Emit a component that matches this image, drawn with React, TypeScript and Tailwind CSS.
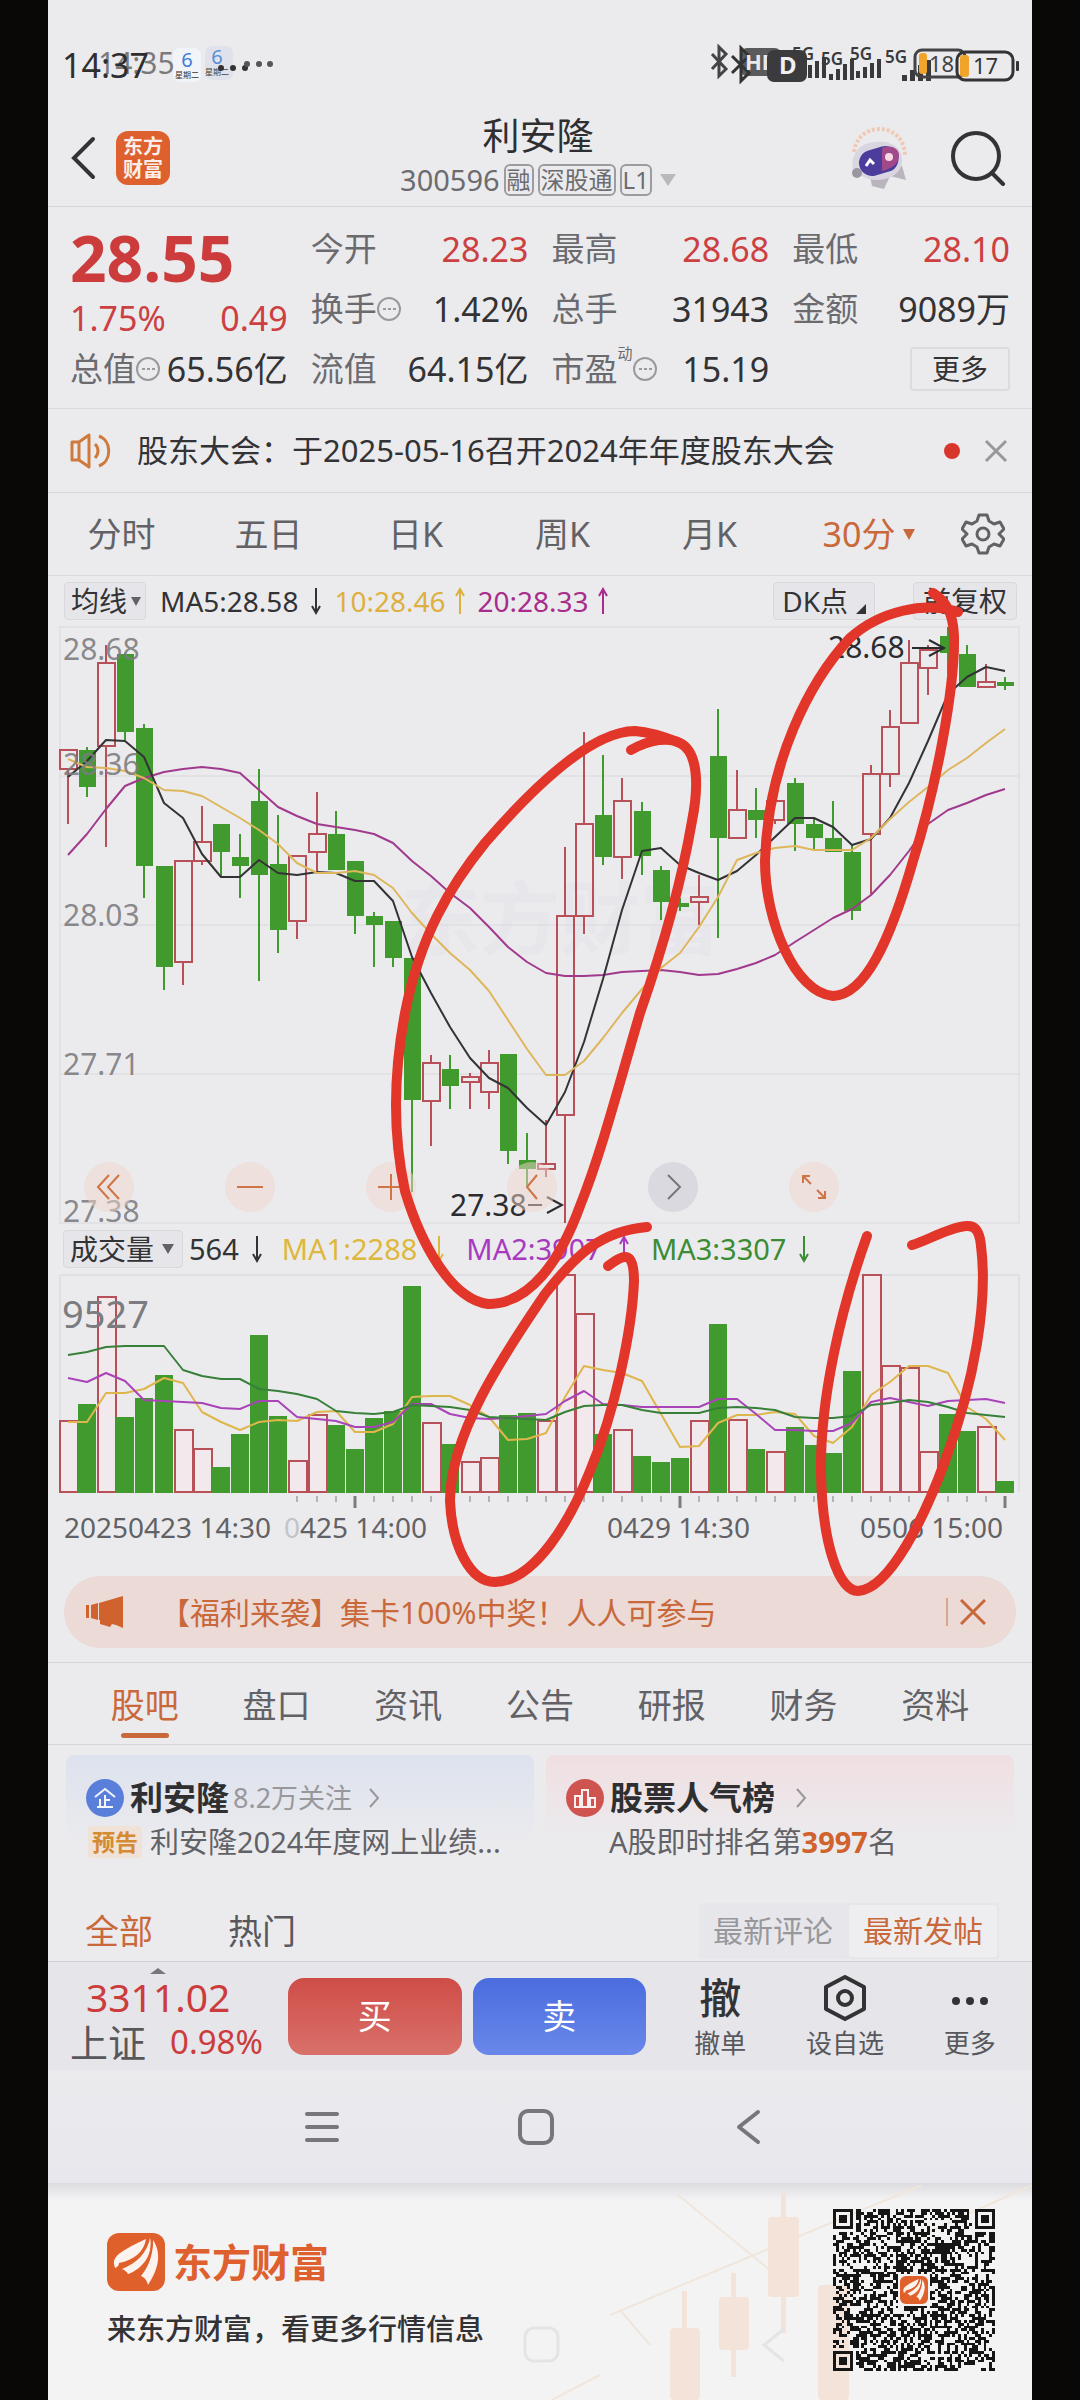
import React, { useState } from 'react';

const PITCH = 19.12;
const FIRST_X = 20;

const cx = (i: number) => Math.round(FIRST_X + i * PITCH);

// [rising, high, body top, body bottom, low]
const CANDLES: [number, number, number, number, number][] = [
  [1, 124, 124, 143, 198],
  [0, 121, 124, 161, 171],
  [1, 19, 37, 120, 221],
  [0, 27, 28, 106, 114],
  [0, 98, 102, 240, 272],
  [0, 240, 240, 341, 364],
  [1, 235, 235, 336, 359],
  [1, 180, 216, 235, 239],
  [0, 198, 198, 226, 250],
  [0, 208, 231, 240, 272],
  [0, 143, 175, 249, 355],
  [0, 189, 238, 304, 327],
  [1, 230, 230, 295, 313],
  [1, 166, 208, 226, 247],
  [0, 185, 208, 244, 244],
  [0, 235, 235, 290, 308],
  [0, 286, 290, 299, 341],
  [0, 295, 295, 332, 341],
  [0, 332, 332, 474, 566],
  [1, 429, 437, 475, 520],
  [0, 429, 443, 460, 483],
  [1, 447, 451, 456, 483],
  [1, 424, 437, 466, 483],
  [0, 428, 428, 525, 538],
  [0, 507, 534, 543, 560],
  [1, 494, 538, 543, 551],
  [1, 221, 290, 489, 597],
  [1, 106, 198, 290, 308],
  [0, 129, 189, 231, 239],
  [1, 152, 175, 231, 253],
  [0, 176, 185, 230, 249],
  [0, 240, 244, 276, 294],
  [0, 272, 277, 281, 285],
  [1, 249, 271, 276, 299],
  [0, 83, 130, 212, 312],
  [1, 144, 184, 212, 212],
  [0, 162, 184, 194, 212],
  [1, 175, 175, 194, 198],
  [0, 152, 157, 198, 225],
  [0, 192, 198, 212, 224],
  [0, 175, 212, 226, 226],
  [0, 218, 226, 285, 294],
  [1, 139, 148, 208, 268],
  [1, 84, 101, 148, 161],
  [1, 14, 37, 97, 97],
  [1, 19, 24, 42, 69],
  [0, 1, 10, 27, 48],
  [0, 19, 28, 61, 61],
  [1, 38, 56, 61, 61],
  [0, 51, 56, 60, 64],
];

const MA5 = [
  151, 135, 114, 115, 131, 177, 192, 228, 251, 251, 234, 247, 249, 246, 247, 255, 255, 275, 331, 367,
  401, 432, 452, 462, 482, 499, 466, 416, 353, 284, 225, 222, 239, 247, 254, 245, 229, 211, 192, 192,
  201, 219, 213, 192, 157, 115, 68, 51, 41, 45,
];
const MA10 = [
  133, 141, 142, 145, 152, 164, 165, 170, 181, 192, 204, 218, 237, 247, 247, 245, 249, 262, 287, 308,
  327, 344, 365, 394, 423, 449, 449, 435, 412, 387, 363, 342, 327, 301, 271, 234, 227, 222, 220, 224,
  224, 224, 212, 193, 176, 161, 144, 132, 117, 103,
];
const MA20 = [
  229, 208, 183, 160, 152, 146, 143, 141, 143, 147, 164, 181, 190, 198, 201, 204, 208, 217, 235, 250,
  267, 282, 301, 321, 336, 347, 350, 350, 349, 346, 345, 344, 346, 349, 348, 343, 337, 329, 316, 304,
  292, 283, 269, 249, 225, 198, 184, 177, 169, 163,
];

const VOLUMES = [
  71, 88, 195, 75, 94, 117, 62, 43, 25, 58, 157, 76, 31, 77, 67, 43, 74, 81, 206, 69, 48, 30, 34, 77,
  79, 71, 217, 178, 58, 62, 36, 30, 34, 71, 168, 72, 43, 40, 65, 47, 39, 121, 217, 126, 124, 40, 78,
  61, 65, 11,
];
const VOL_MA1 = [
  148, 148, 119, 119, 115, 104, 109, 138, 148, 156, 148, 146, 147, 138, 137, 158, 158, 150, 123, 122,
  122, 131, 143, 166, 165, 159, 123, 92, 96, 99, 107, 140, 173, 172, 149, 141, 141, 138, 140, 162, 169,
  153, 121, 108, 92, 92, 99, 133, 145, 166,
];
const VOL_MA2 = [
  104, 108, 99, 107, 126, 127, 128, 129, 134, 135, 127, 127, 143, 145, 147, 153, 153, 148, 130, 130,
  140, 144, 145, 144, 142, 140, 127, 117, 130, 131, 133, 133, 133, 133, 125, 125, 140, 156, 156, 157,
  157, 149, 128, 124, 128, 132, 127, 126, 125, 129,
];
const VOL_MA3 = [
  81, 78, 73, 72, 72, 72, 96, 102, 105, 105, 115, 117, 120, 125, 137, 139, 140, 138, 131, 132, 133,
  136, 143, 144, 145, 146, 138, 132, 131, 131, 136, 139, 139, 139, 134, 133, 134, 136, 143, 144, 144,
  142, 131, 129, 126, 128, 133, 139, 141, 143,
];

const RED = '#b8505a';
const GREEN = '#409a2e';

const toPoints = (ys: number[]) => ys.map((y, i) => `${cx(i)},${y}`).join(' ');

function Trend({ ys, color }: { ys: number[]; color: string }) {
  return <polyline points={toPoints(ys)} fill="none" stroke={color} strokeWidth="2" strokeLinejoin="round" />;
}

function StatusBar() {
  return (
    <div className="flex h-[100px] items-center justify-between pt-8 pr-3 pl-[14px] pb-[2px]">
      <div className="relative flex items-center text-[#2e2e30]">
        <span className="text-[34px] leading-10">14:37</span>
        <span className="absolute left-9 -top-[2px] text-[30px] leading-10 text-[#2e2e30]/60">14:35</span>
        <svg viewBox="0 0 110 40" className="ml-6 h-10 w-[110px]">
          <rect x="0" y="3" width="28" height="34" rx="7" fill="#f1f4f8" />
          <rect x="32" y="1" width="28" height="34" rx="7" fill="#dfe2ea" />
          <text x="14" y="22" textAnchor="middle" fontSize="20" fill="#3f7fd6">6</text>
          <text x="44" y="19" textAnchor="middle" fontSize="20" fill="#5b8ed4">6</text>
          <text x="14" y="33" textAnchor="middle" fontSize="8" fill="#333">星期二</text>
          <text x="44" y="30" textAnchor="middle" fontSize="8" fill="#444">星期二</text>
          {[48, 60, 72].map((x) => (
            <circle key={x} cx={x} cy="23" r="3" fill="#333" />
          ))}
          {[74, 86, 97].map((x) => (
            <circle key={x} cx={x} cy="19" r="3" fill="#555" />
          ))}
        </svg>
      </div>
      <svg viewBox="0 0 312 44" className="h-11 w-[312px]" fill="none">
        <path d="M4 11 18 26 11 33 V4 L18 11 4 26" stroke="#444" strokeWidth="3" />
        <rect x="33" y="5" width="40" height="28" rx="6" fill="#5a5a5c" />
        <path d="M24 13 41 30 33 38 V5 L41 13 24 30" stroke="#333" strokeWidth="3" />
        <text x="37" y="27" fontSize="22" fontWeight="700" fill="#e8e8ea">HD</text>
        <rect x="59" y="7" width="40" height="32" rx="7" fill="#3b3b3d" />
        <text x="71" y="31" fontSize="24" fontWeight="700" fill="#f0f0f2">D</text>
        <g fill="#3a3a3c" fontSize="17" fontWeight="600">
          <text x="84" y="17">5G</text>
          <text x="113" y="22">5G</text>
          <text x="142" y="17">5G</text>
          <text x="177" y="20">5G</text>
        </g>
        <g fill="#3a3a3c">
          {[0, 1, 2, 3].map((i) => (
            <React.Fragment key={i}>
              <rect x={93 + i * 7} y={26 - i * 4} width="4" height={9 + i * 4} />
              <rect x={121 + i * 7} y={31 - i * 5} width="4" height={6 + i * 5} />
              <rect x={148 + i * 7} y={28 - i * 4} width="4" height={7 + i * 4} />
              <rect x={194 + i * 8} y={32 - i * 5} width="5" height={6 + i * 5} />
            </React.Fragment>
          ))}
        </g>
        <rect x="207" y="7" width="50" height="27" rx="7" stroke="#444" strokeWidth="3" />
        <rect x="211" y="10" width="8" height="21" rx="3" fill="#f0a42c" />
        <text x="221" y="29" fontSize="22" fill="#444">18</text>
        <rect x="249" y="9" width="56" height="28" rx="8" stroke="#333" strokeWidth="3" />
        <rect x="252" y="12" width="9" height="22" rx="3" fill="#f0a42c" />
        <text x="265" y="31" fontSize="22" fill="#333">17</text>
        <rect x="308" y="18" width="3" height="10" rx="1" fill="#333" />
      </svg>
    </div>
  );
}

function Header() {
  return (
    <header className="flex items-center border-b border-[#d5d5d9] px-[22px] pt-[14px] pb-1">
      <div className="flex flex-1 items-center gap-5">
        <button aria-label="返回">
          <svg viewBox="0 0 26 44" className="h-11 w-[26px]" fill="none" stroke="#333" strokeWidth="4" strokeLinecap="round">
            <path d="M23 3 4 22 23 41" />
          </svg>
        </button>
        <a
          href="#home"
          className="flex h-[54px] w-[54px] flex-col items-center justify-center rounded-xl bg-[#dd602e] text-[20px] leading-[23px] font-bold text-[#fbeee8]"
        >
          <span>东方</span>
          <span>财富</span>
        </a>
      </div>
      <div className="text-center">
        <h1 className="text-[37px] leading-[44px] text-[#2f2f31]">利安隆</h1>
        <button className="flex items-center gap-1 text-[29px] leading-[44px] text-[#6c6c70]">
          <span>300596</span>
          <span className="rounded-md border-2 border-[#9c9ca0] px-px text-[24px] leading-7">融</span>
          <span className="rounded-md border-2 border-[#9c9ca0] px-px text-[24px] leading-7">深股通</span>
          <span className="rounded-md border-2 border-[#9c9ca0] px-px text-[24px] leading-7">L1</span>
          <svg viewBox="0 0 16 12" className="ml-1 h-3 w-4" fill="#b9b9bd">
            <path d="M0 0H16L8 12Z" />
          </svg>
        </button>
      </div>
      <div className="flex flex-1 items-center justify-end gap-[42px] pr-1">
        <button aria-label="智能助手">
          <svg viewBox="0 0 60 64" className="h-16 w-[60px]">
            <path d="M6 26C8 10 20 3 32 3 46 3 57 14 57 30" fill="none" stroke="#efc9b4" strokeWidth="4" strokeDasharray="3 2" />
            <path d="M22 50 24 60 36 63 42 50 58 54 54 40Z" fill="#b9b4bd" />
            <path d="M5 46C2 30 10 16 28 16 46 14 56 24 54 38 50 52 34 56 20 53Z" fill="#d9d6e2" />
            <rect x="11" y="22" width="40" height="26" rx="13" transform="rotate(-16 31 36)" fill="#4c3c9c" />
            <path d="M34 22C44 18 52 23 51 31 50 39 42 43 34 45Z" fill="#a04a8c" />
            <path d="M18 40 22 34 26 38" fill="none" stroke="#fff" strokeWidth="3" />
            <circle cx="41" cy="31" r="4" fill="#f7d9e6" />
            <circle cx="9" cy="47" r="5" fill="#9b97a2" />
          </svg>
        </button>
        <button aria-label="搜索">
          <svg viewBox="0 0 56 56" className="h-14 w-14" fill="none" stroke="#333" strokeWidth="4" strokeLinecap="round">
            <circle cx="26" cy="26" r="23" />
            <path d="M42 43 53 54" />
          </svg>
        </button>
      </div>
    </header>
  );
}

function InfoDot() {
  return (
    <svg viewBox="0 0 24 24" className="h-6 w-6 shrink-0" fill="none" stroke="#9a9a9e" strokeWidth="2">
      <circle cx="12" cy="12" r="11" />
      <path d="M6 12h3M11 12h3M16 12h3" />
    </svg>
  );
}

interface StatProps {
  label: string;
  value: string;
  red?: boolean;
  info?: boolean;
  sup?: string;
}

function Stat({ label, value, red, info, sup }: StatProps) {
  return (
    <div className="flex h-[60px] items-center justify-between whitespace-nowrap">
      <dt className="flex items-center text-[33px] text-[#6b6b6f]">
        {label}
        {sup && <sup className="-top-4 text-[15px]">{sup}</sup>}
        {info && <InfoDot />}
      </dt>
      <dd className={red ? 'text-[34px] text-[#cc4042]' : 'text-[34px] text-[#333335]'}>{value}</dd>
    </div>
  );
}

function QuotePanel() {
  return (
    <dl className="grid grid-cols-4 gap-x-[23px] border-b border-[#dadade] px-[22px] pt-3 pb-[9px] leading-10">
      <div>
        <div className="text-[64px] leading-[78px] font-bold text-[#cc3c3c]">28.55</div>
        <div className="flex h-[42px] items-center justify-between text-[34px] text-[#cc4042]">
          <span>1.75%</span>
          <span>0.49</span>
        </div>
        <Stat label="总值" value="65.56亿" info />
      </div>
      <div>
        <Stat label="今开" value="28.23" red />
        <Stat label="换手" value="1.42%" info />
        <Stat label="流值" value="64.15亿" />
      </div>
      <div>
        <Stat label="最高" value="28.68" red />
        <Stat label="总手" value="31943" />
        <Stat label="市盈" value="15.19" sup="动" info />
      </div>
      <div>
        <Stat label="最低" value="28.10" red />
        <Stat label="金额" value="9089万" />
        <div className="flex h-[60px] items-center justify-end">
          <button className="rounded border-2 border-[#dcdce0] px-5 text-[28px] text-[#333335]">更多</button>
        </div>
      </div>
    </dl>
  );
}

function Notice() {
  return (
    <div className="flex h-[84px] items-center border-b border-[#d5d5d9] pr-6 pl-[22px]">
      <svg viewBox="0 0 42 36" className="h-9 w-[42px]" fill="none" stroke="#cf7a3c" strokeWidth="3" strokeLinejoin="round">
        <path d="M2 9H9L19 2V34L9 27H2ZM9 9V27" />
        <path d="M25 11C29 15 29 21 25 25M29 3C42 8 42 28 29 33" />
      </svg>
      <p className="ml-[25px] flex-1 text-[31px] text-[#333335]">股东大会：于2025-05-16召开2024年年度股东大会</p>
      <span className="h-4 w-4 rounded-full bg-[#d8362c]" />
      <button aria-label="关闭" className="ml-6">
        <svg viewBox="0 0 24 24" className="h-6 w-6" stroke="#98989c" strokeWidth="3">
          <path d="M2 2 22 22M22 2 2 22" />
        </svg>
      </button>
    </div>
  );
}

const PERIODS = ['分时', '五日', '日K', '周K', '月K'];

function PeriodTabs() {
  return (
    <nav className="flex h-[83px] items-center border-b border-[#d9d9dd] pr-[21px] text-[34px] text-[#626266]">
      {PERIODS.map((name) => (
        <button key={name} className="flex-1">
          {name}
        </button>
      ))}
      <button className="flex w-[172px] items-center justify-center gap-2 text-[#c9683a]">
        30分
        <svg viewBox="0 0 12 11" className="h-[11px] w-3" fill="#c9683a">
          <path d="M0 0H12L6 11Z" />
        </svg>
      </button>
      <button aria-label="设置" className="flex w-14 justify-center">
        <svg viewBox="0 0 44 44" className="h-11 w-11" fill="none" stroke="#626266" strokeWidth="3" strokeLinejoin="round">
          <path d="M18 3H26L28 9 33 12 39 10 43 17 38 22 43 27 39 34 33 32 28 35 26 41H18L16 35 11 32 5 34 1 27 6 22 1 17 5 10 11 12 16 9Z" />
          <circle cx="22" cy="22" r="6" />
        </svg>
      </button>
    </nav>
  );
}

function Arrow({ up, color }: { up?: boolean; color: string }) {
  return (
    <svg viewBox="0 0 12 28" className="h-7 w-3 shrink-0" fill="none" stroke={color} strokeWidth="2">
      {up ? <path d="M6 27V2M2 9 6 2 10 9" /> : <path d="M6 1V26M2 19 6 26 10 19" />}
    </svg>
  );
}

function IndicatorRow() {
  return (
    <div className="flex h-[50px] items-center px-4 pr-[15px] text-[28px] whitespace-nowrap text-[#333335]">
      <button className="flex items-center rounded border border-[#d9d9dd] bg-[#e6e6ea] pr-1 pl-[6px] leading-9">
        均线
        <svg viewBox="0 0 10 9" className="ml-1 h-[9px] w-[10px]" fill="#626266">
          <path d="M0 0H10L5 9Z" />
        </svg>
      </button>
      <span className="mr-3 ml-[14px]">MA5:28.58</span>
      <Arrow color="#333335" />
      <span className="mr-2 ml-3 text-[#ddb040]">10:28.46</span>
      <Arrow up color="#ddb040" />
      <span className="mr-2 ml-3 text-[#a92b8c]">20:28.33</span>
      <Arrow up color="#a92b8c" />
      <button className="ml-auto flex items-center gap-2 rounded border border-[#d9d9dd] bg-[#e6e6ea] px-2 leading-9">
        DK点
        <svg viewBox="0 0 10 10" className="mt-4 h-[10px] w-[10px]" fill="#333335">
          <path d="M10 0V10H0Z" />
        </svg>
      </button>
      <button className="ml-[38px] rounded border border-[#d9d9dd] bg-[#e6e6ea] px-[9px] leading-9">前复权</button>
    </div>
  );
}

function CandleChart() {
  return (
    <svg viewBox="0 0 984 598" className="block w-full">
      <text x="512" y="322" textAnchor="middle" fontSize="80" fontWeight="700" fill="#e7e7eb">
        东方财富
      </text>
      <g stroke="#d9d9dd" strokeWidth="1">
        {[1, 150, 299, 448, 597].map((y) => (
          <path key={y} d={`M12 ${y}H971`} />
        ))}
        <path d="M12 0V598M971 0V598" />
      </g>
      {CANDLES.map(([rising, high, top, bottom, low], i) => {
        const x = cx(i);
        return rising ? (
          <g key={i} fill="none" stroke={RED} strokeWidth="2">
            <path d={`M${x} ${high}V${top}M${x} ${bottom}V${low}`} />
            <rect x={x - 8} y={top} width="17" height={bottom - top} />
          </g>
        ) : (
          <g key={i} fill={GREEN}>
            <rect x={x - 1} y={high} width="2" height={low - high} />
            <rect x={x - 8} y={top} width="17" height={bottom - top} />
          </g>
        );
      })}
      <Trend ys={MA20} color="#a13a8c" />
      <Trend ys={MA5} color="#333335" />
      <Trend ys={MA10} color="#deb65c" />
      <g fontSize="30" fill="#7c7c80" fillOpacity="0.9">
        <text x="15" y="34">28.68</text>
        <text x="15" y="149">28.36</text>
        <text x="15" y="300">28.03</text>
        <text x="15" y="449">27.71</text>
        <text x="15" y="596">27.38</text>
      </g>
      <g fontSize="30" fill="#2c2c2e">
        <text x="402" y="590">27.38</text>
        <text x="780" y="32">28.68</text>
      </g>
      <path d="M480 579H494M499 571 514 579 499 587M864 22H894M881 14 896 22 881 30" fill="none" stroke="#2c2c2e" strokeWidth="2" />
    </svg>
  );
}

const CONTROLS = [
  { name: '最左', d: 'M25 13 14 25 25 37M35 13 24 25 35 37' },
  { name: '缩小', d: 'M12 25H38' },
  { name: '放大', d: 'M12 25H38M25 12V38' },
  { name: '左移', d: 'M30 13 20 25 30 37' },
  { name: '右移', d: 'M20 13 32 25 20 37' },
  { name: '全屏', d: 'M14 21V14H21M14 14 22 22M36 29V36H29M36 36 28 28' },
];

function ChartControls() {
  return (
    <div className="absolute bottom-3 left-[36px] flex gap-[91px]">
      {CONTROLS.map(({ name, d }) => {
        const muted = name === '右移';
        return (
          <button
            key={name}
            aria-label={name}
            className={muted ? 'h-[50px] w-[50px] rounded-full bg-[#c8c8d0]/50' : 'h-[50px] w-[50px] rounded-full bg-[#f0d6cc]/50'}
          >
            <svg viewBox="0 0 50 50" fill="none" stroke={muted ? '#77777b' : '#cf7444'} strokeWidth="2">
              <path d={d} />
            </svg>
          </button>
        );
      })}
    </div>
  );
}

function VolumeRow() {
  return (
    <div className="flex h-[50px] items-center px-[15px] text-[29px] whitespace-nowrap text-[#333335]">
      <button className="flex items-center rounded border border-[#d9d9dd] bg-[#e6e6ea] pr-2 pl-[6px] text-[28px] leading-9">
        成交量
        <svg viewBox="0 0 12 10" className="ml-2 h-[10px] w-3" fill="#626266">
          <path d="M0 0H12L6 10Z" />
        </svg>
      </button>
      <span className="mr-3 ml-[6px]">564</span>
      <Arrow color="#333335" />
      <span className="mr-4 ml-[19px] text-[#ddb83c]">MA1:2288</span>
      <Arrow color="#ddb83c" />
      <span className="mr-4 ml-[21px] text-[#a83ac0]">MA2:3907</span>
      <Arrow up color="#a83ac0" />
      <span className="mr-3 ml-[21px] text-[#3b8c34]">MA3:3307</span>
      <Arrow color="#3b8c34" />
    </div>
  );
}

function VolumeChart() {
  return (
    <svg viewBox="0 0 984 287" className="block w-full">
      <path d="M12 218V1H971V218" fill="none" stroke="#d5d5d9" />
      {VOLUMES.map((h, i) => {
        const x = cx(i);
        return CANDLES[i][0] ? (
          <rect key={i} x={x - 8} y={218 - h} width="18" height={h} fill="#f1e9ec" stroke={RED} strokeWidth="2" />
        ) : (
          <rect key={i} x={x - 9} y={218 - h} width="18" height={h + 1} fill={GREEN} />
        );
      })}
      <Trend ys={VOL_MA1} color="#deb64c" />
      <Trend ys={VOL_MA2} color="#a944b8" />
      <Trend ys={VOL_MA3} color="#38803a" />
      <text x="14" y="54" fontSize="38" fill="#7c7c80">9527</text>
      {VOLUMES.map((_, i) => {
        if (i < 12) return null;
        const major = i === 15 || i === 32 || i === 49;
        return (
          <path key={i} d={`M${cx(i)} 222V${major ? 234 : 228}`} stroke="#7c7c80" strokeWidth={major ? 3 : 1} />
        );
      })}
      <g fontSize="28" fill="#626266">
        <text x="16" y="264">20250423 14:30</text>
        <text x="236" y="264">
          <tspan fill="#c4c4c8">0</tspan>425 14:00
        </text>
        <text x="559" y="264">0429 14:30</text>
        <text x="812" y="264">0506 15:00</text>
      </g>
    </svg>
  );
}

// hand drawn loops over both charts
const STROKES = [
  'M631 749C650 738 670 736 680 742C700 752 698 790 692 820C680 890 660 955 640 1012C620 1080 602 1150 580 1205C560 1260 530 1303 488 1303C450 1298 420 1240 405 1190C392 1130 394 1070 405 1012C420 935 450 885 485 842C530 790 590 730 635 730C650 731 665 736 680 742',
  'M933 592C945 600 953 610 954 635C955 690 935 790 913 860C890 940 865 994 833 995C795 992 765 920 765 860C768 760 810 680 850 637C880 610 925 600 958 611',
  'M647 1226C600 1230 575 1255 545 1293C510 1345 450 1430 450 1500C452 1545 470 1581 495 1581C535 1580 570 1520 590 1470C615 1410 632 1330 634 1280C634 1250 625 1252 608 1265',
  'M867 1235C840 1310 820 1400 821 1470C822 1540 838 1590 858 1590C890 1588 925 1515 945 1460C975 1380 988 1300 981 1245C979 1222 970 1222 950 1229C935 1234 925 1240 912 1244',
];

function Charts() {
  return (
    <section className="relative">
      <IndicatorRow />
      <div className="relative">
        <CandleChart />
        <ChartControls />
      </div>
      <VolumeRow />
      <VolumeChart />
      <svg
        viewBox="48 575 984 985"
        className="pointer-events-none absolute inset-0 z-10 h-full w-full overflow-visible"
        fill="none"
        stroke="#e2362a"
        strokeWidth="10"
        strokeLinecap="round"
        strokeLinejoin="round"
      >
        {STROKES.map((d) => (
          <path key={d} d={d} />
        ))}
      </svg>
    </section>
  );
}

function PromoBanner() {
  return (
    <div className="mx-4 mt-[15px] mb-[14px] flex h-[72px] items-center rounded-full bg-[#ebdad6] pr-[30px] pl-[22px]">
      <svg viewBox="0 0 38 32" className="h-8 w-[38px]" fill="#d0622e">
        <path d="M0 9H3V22H0ZM5 9 12 7V24L5 22ZM13 7 37 0V32L30 29 26 28 24 31 14 28V24H13Z" />
      </svg>
      <p className="ml-9 flex-1 text-[30px] text-[#c9683a]">【福利来袭】集卡100%中奖！人人可参与</p>
      <span className="h-7 w-[2px] bg-[#d9a68c]" />
      <button aria-label="关闭" className="ml-3">
        <svg viewBox="0 0 26 26" className="h-[26px] w-[26px]" stroke="#c9683a" strokeWidth="3">
          <path d="M1 1 25 25M25 1 1 25" />
        </svg>
      </button>
    </div>
  );
}

const TABS = ['股吧', '盘口', '资讯', '公告', '研报', '财务', '资料'];

function SectionTabs() {
  const [active, setActive] = useState(TABS[0]);

  return (
    <nav className="flex h-[83px] items-start border-y border-[#d5d5d9] px-[31px] text-[34px] text-[#626266]">
      {TABS.map((tab) => (
        <button
          key={tab}
          onClick={() => setActive(tab)}
          className={tab === active ? 'flex-1 text-[#c9683a]' : 'flex-1'}
        >
          <span className="block pt-[17px] leading-[50px]">{tab}</span>
          {tab === active && <span className="mx-auto mt-[3px] block h-[5px] w-12 rounded-full bg-[#c9683a]" />}
        </button>
      ))}
    </nav>
  );
}

function Chevron() {
  return (
    <svg viewBox="0 0 12 20" className="h-5 w-3" fill="none" stroke="#98989c" strokeWidth="2">
      <path d="M2 1 10 10 2 19" />
    </svg>
  );
}

function CommunityCards() {
  return (
    <div className="grid grid-cols-2 gap-3 px-[18px] pt-[10px] pb-10">
      <a href="#company" className="rounded-lg bg-linear-to-b from-[#dde2ee] to-[#ebebee] to-80% pt-5 pl-5">
        <div className="flex items-center">
          <svg viewBox="0 0 38 38" className="h-[38px] w-[38px]">
            <circle cx="19" cy="19" r="19" fill="#5a7fda" />
            <path d="M9 18 19 10 29 18M19 16V27M14 20V27M19 21H24M11 28H27" fill="none" stroke="#f4f6fc" strokeWidth="2" />
          </svg>
          <h2 className="ml-[6px] text-[33px] leading-[46px] font-bold text-[#2f2f31]">利安隆</h2>
          <span className="mr-4 ml-1 text-[27px] text-[#98989c]">8.2万关注</span>
          <Chevron />
        </div>
        <p className="flex items-center text-[29px] leading-[42px] whitespace-nowrap text-[#626266]">
          <span className="mr-2 ml-[2px] rounded bg-[#f0e2d6] px-1 text-[23px] leading-8 font-bold text-[#d58a34]">预告</span>
          利安隆2024年度网上业绩...
        </p>
      </a>
      <a href="#rank" className="rounded-lg bg-linear-to-b from-[#f0dfe2] to-[#ebebee] to-80% pt-5 pl-5">
        <div className="flex items-center">
          <svg viewBox="0 0 38 38" className="h-[38px] w-[38px]">
            <circle cx="19" cy="19" r="19" fill="#cf5450" />
            <path d="M9 17H14V28H9ZM16 11H22V28H16ZM24 19H29V28H24Z" fill="none" stroke="#fbeeee" strokeWidth="2" />
          </svg>
          <h2 className="mr-5 ml-[6px] text-[33px] leading-[46px] font-bold text-[#2f2f31]">股票人气榜</h2>
          <Chevron />
        </div>
        <p className="pl-[43px] text-[29px] leading-[42px] whitespace-nowrap text-[#626266]">
          A股即时排名第<b className="text-[#d0622e]">3997</b>名
        </p>
      </a>
    </div>
  );
}

function PostFilter() {
  return (
    <div className="flex items-center border-b border-[#cfcfd3] pr-[33px] pb-[2px] pl-[37px] text-[34px]">
      <button className="text-[#c9683a]">全部</button>
      <button className="ml-[75px] text-[#58585c]">热门</button>
      <div className="ml-auto flex items-center rounded bg-[#e7e7eb] text-[30px] leading-[52px]">
        <button className="px-[14px] text-[#98989c]">最新评论</button>
        <button className="rounded border-2 border-[#e6e6ea] bg-[#eeeef0] px-[14px] text-[#c9683a]">最新发帖</button>
      </div>
    </div>
  );
}

function TradeBar() {
  return (
    <div className="flex h-[108px] items-center bg-[#e5e5ea] pl-[22px]">
      <div className="w-[218px]">
        <svg viewBox="0 0 16 6" className="ml-20 h-[6px] w-4" fill="#77777b">
          <path d="M0 6H16L8 0Z" />
        </svg>
        <div className="pl-4 text-[39px] leading-[46px] text-[#cc3c3c]">3311.02</div>
        <div className="flex items-center leading-[44px]">
          <span className="text-[38px] text-[#58585c]">上证</span>
          <span className="ml-6 text-[33px] text-[#cc3c3c]">0.98%</span>
        </div>
      </div>
      <div className="flex flex-1 gap-[11px]">
        <button className="h-[77px] flex-1 rounded-2xl bg-linear-to-b from-[#cf4c48] to-[#d9706a] text-[34px] text-white">买</button>
        <button className="h-[77px] flex-1 rounded-2xl bg-linear-to-b from-[#4a6cde] to-[#6a88ea] text-[34px] text-white">卖</button>
      </div>
      <div className="ml-3 flex w-[374px] text-[26px] leading-8 text-[#58585c]">
        <button className="flex flex-1 flex-col items-center gap-1">
          <span className="text-[42px] leading-[50px] font-medium text-[#333335]">撤</span>
          撤单
        </button>
        <button className="flex flex-1 flex-col items-center gap-1">
          <svg viewBox="0 0 50 50" className="h-[50px] w-[50px]" fill="none" stroke="#333335" strokeWidth="4" strokeLinejoin="round">
            <path d="M25 4 44 14V36L25 46 6 36V14Z" />
            <circle cx="25" cy="25" r="7" />
          </svg>
          设自选
        </button>
        <button className="flex flex-1 flex-col items-center gap-1">
          <svg viewBox="0 0 50 50" className="h-[50px] w-[50px]" fill="#333335">
            <circle cx="11" cy="28" r="4" />
            <circle cx="25" cy="28" r="4" />
            <circle cx="39" cy="28" r="4" />
          </svg>
          更多
        </button>
      </div>
    </div>
  );
}

function SystemNav() {
  return (
    <nav className="flex h-[113px] items-center justify-center gap-[178px] bg-linear-to-b from-[#ebebee] to-[#e7e7ed] pr-2">
      <button aria-label="任务">
        <svg viewBox="0 0 36 36" className="h-9 w-9" stroke="#77777b" strokeWidth="4" strokeLinecap="round">
          <path d="M3 5H33M3 18H33M3 31H33" />
        </svg>
      </button>
      <button aria-label="主页">
        <svg viewBox="0 0 36 36" className="h-9 w-9" fill="none" stroke="#77777b" strokeWidth="4">
          <rect x="2" y="2" width="32" height="32" rx="8" />
        </svg>
      </button>
      <button aria-label="后退">
        <svg viewBox="0 0 36 36" className="h-9 w-9" fill="none" stroke="#77777b" strokeWidth="4" strokeLinecap="round" strokeLinejoin="round">
          <path d="M26 3 7 18 26 33" />
        </svg>
      </button>
    </nav>
  );
}

function Logo({ className }: { className: string }) {
  return (
    <svg viewBox="0 0 58 58" className={className}>
      <rect width="58" height="58" rx="12" fill="#e0602c" />
      <path d="M7 31C6 22 18 16 39 6 37 19 27 27 12 30 12 33 10 34 8 35Z" fill="#fdf3ee" />
      <path d="M15 36C30 30 40 20 43 5 47 20 36 36 21 41 20 39 18 37 15 36Z" fill="#fdf3ee" />
      <path d="M46 7C56 22 50 38 41 52 40 47 37 44 34 43 42 33 46 22 46 7Z" fill="#fdf3ee" />
      <path d="M14 33C28 29 38 20 41 5M28 42C38 35 45 23 45 7" fill="none" stroke="#e0602c" strokeWidth="2" />
    </svg>
  );
}

const QR_SIZE = 57;

// deterministic module pattern with the three finder squares
function qrPath() {
  let seed = 20250506;
  let d = '';
  const finder = (x: number, y: number) => {
    const ring = Math.max(Math.abs(x - 3), Math.abs(y - 3));
    return ring === 3 || ring <= 1;
  };
  const last = QR_SIZE - 7;
  for (let y = 0; y < QR_SIZE; y++) {
    for (let x = 0; x < QR_SIZE; x++) {
      seed = (seed * 1103515245 + 12345) % 2147483648;
      let on = seed / 2147483648 > 0.48;
      if (x < 8 && y < 8) on = x < 7 && y < 7 && finder(x, y);
      else if (x >= last - 1 && y < 8) on = x >= last && y < 7 && finder(x - last, y);
      else if (x < 8 && y >= last - 1) on = x < 7 && y >= last && finder(x, y - last);
      else if (Math.abs(x - 28) < 6 && Math.abs(y - 28) < 6) on = false;
      if (on) d += `M${x} ${y}h1v1h-1z`;
    }
  }
  return d;
}

const QR_PATH = qrPath();

function BrandFooter() {
  return (
    <footer className="relative flex flex-1 items-start justify-between overflow-hidden bg-[#f4f3f4] bg-linear-to-b from-[#dcdce0] to-[#f4f3f4] to-8% pt-[26px] pr-[37px] pb-[26px] pl-[59px]">
      <svg viewBox="0 0 520 215" className="absolute right-0 bottom-0 h-[215px] w-[520px]" fill="none">
        <g stroke="#efe6dc" strokeWidth="2">
          <path d="M166 10 264 90M98 130 410 0M108 125 138 160M40 215 88 190M388 60 520 0" />
        </g>
        <g fill="#f4e3d9">
          <rect x="256" y="32" width="31" height="80" rx="4" />
          <rect x="269" y="8" width="5" height="140" />
          <rect x="207" y="112" width="30" height="53" rx="4" />
          <rect x="219" y="88" width="5" height="104" />
          <rect x="158" y="143" width="30" height="72" rx="4" />
          <rect x="170" y="106" width="5" height="40" />
          <rect x="306" y="100" width="31" height="115" rx="4" />
        </g>
        <g stroke="#e4e4e6" strokeWidth="3">
          <rect x="13" y="143" width="33" height="33" rx="9" />
          <path d="M272 144 252 160 272 176" />
        </g>
      </svg>
      <div className="relative pt-6">
        <div className="flex items-center gap-2">
          <Logo className="h-[58px] w-[58px]" />
          <strong className="text-[39px] leading-[58px] font-bold text-[#dd602e]">东方财富</strong>
        </div>
        <p className="mt-[18px] text-[29px] leading-10 font-medium text-[#333335]">来东方财富，看更多行情信息</p>
      </div>
      <div className="relative grid h-[162px] w-[162px] place-items-center">
        <svg viewBox="0 0 57 57" className="absolute inset-0" fill="#161616" shapeRendering="crispEdges" role="img" aria-label="二维码">
          <path d={QR_PATH} />
        </svg>
        <Logo className="relative h-7 w-7" />
      </div>
    </footer>
  );
}

export default function App() {
  return (
    <div className="min-h-screen bg-[#090807] px-12 font-['Noto_Sans','Noto_Sans_CJK_SC',sans-serif]">
      <main className="flex min-h-screen flex-col bg-[#ebebee]">
        <StatusBar />
        <Header />
        <QuotePanel />
        <Notice />
        <PeriodTabs />
        <Charts />
        <PromoBanner />
        <SectionTabs />
        <CommunityCards />
        <PostFilter />
        <TradeBar />
        <SystemNav />
        <BrandFooter />
      </main>
    </div>
  );
}
